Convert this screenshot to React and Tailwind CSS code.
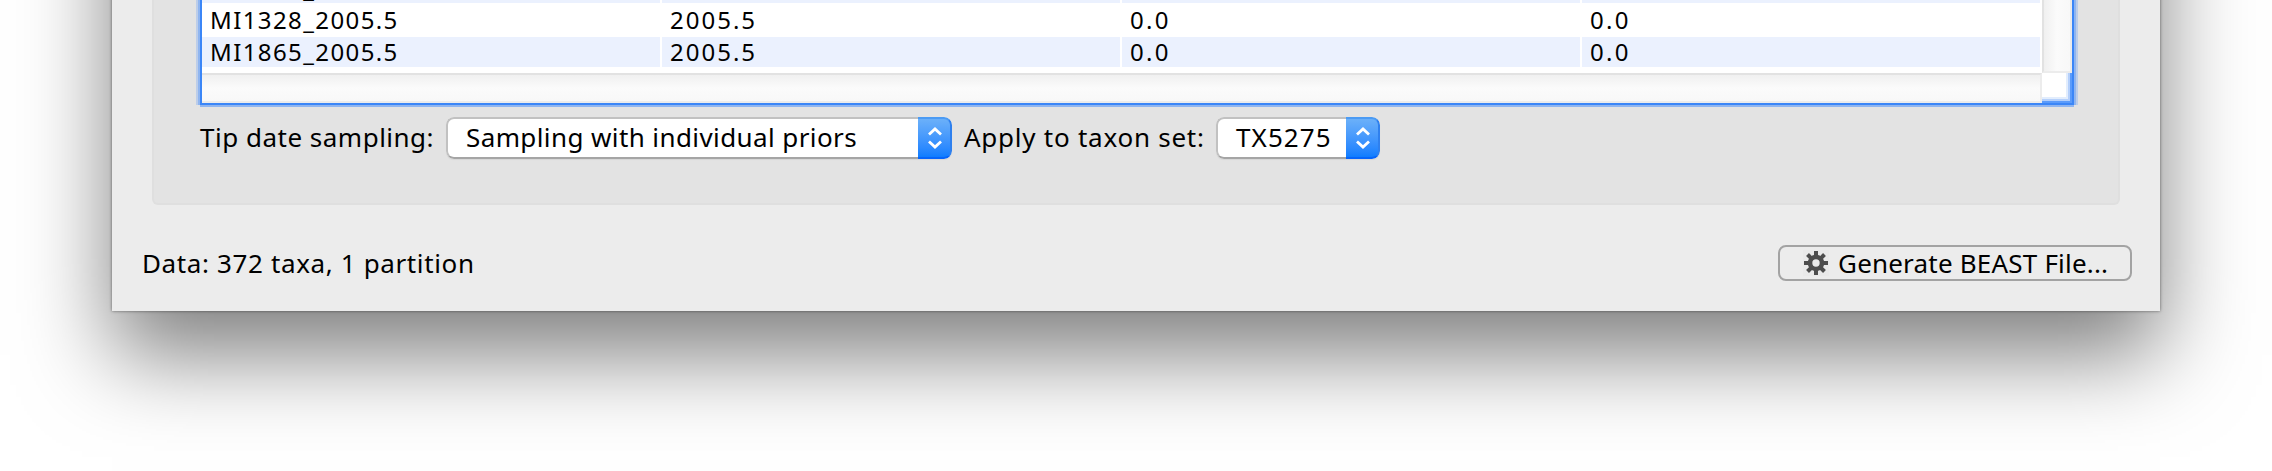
import React from "react";

const rows = [
  { name: "MI1327_2005.5", striped: true },
  { name: "MI1328_2005.5", striped: false },
  { name: "MI1865_2005.5", striped: true },
];

function TableRow({ name, striped }) {
  const bg = striped ? "bg-[#ebf1fe]" : "bg-white";
  const cell = `h-[30px] w-[458px] pl-[8px] leading-[30px] whitespace-nowrap ${bg}`;
  return (
    <div className="mb-0.5 flex h-[30px] shrink-0 gap-0.5 text-[24px]">
      <div className={`${cell} tracking-[1.4px]`}>{name}</div>
      <div className={`${cell} tracking-[2px]`}>2005.5</div>
      <div className={`${cell} tracking-[2.3px]`}>0.0</div>
      <div className={`${cell} tracking-[2.3px]`}>0.0</div>
    </div>
  );
}

function Table() {
  return (
    <div className="ml-[46px] flex h-[105px] w-[1874px] shrink-0 border-x-2 border-b-2 border-[#3b86f7] bg-white shadow-[-2px_0_0_#8fb5f0,2px_0_0_#8fb5f0,0_2px_0_#8fb5f0,-4px_0_0_#bccde9,4px_0_0_#bccde9]">
      <div className="flex w-[1840px] flex-col">
        <div className="flex h-[73px] flex-col justify-end overflow-hidden pb-1">
          {rows.map((r) => (
            <TableRow key={r.name} {...r} />
          ))}
        </div>
        <div className="h-[30px] border-t-2 border-r-2 border-b-2 border-[#ececec] border-t-[#e2e2e2] bg-linear-to-b from-[#f0f0f0] via-[#fbfbfb] to-[#f8f8f8]" />
      </div>
      <div className="flex w-[30px] flex-col">
        <div className="h-[73px] border-r-2 border-b-2 border-l-2 border-[#ececec] border-l-[#e2e2e2] bg-linear-to-r from-[#f0f0f0] via-[#fbfbfb] to-[#f8f8f8]" />
        <div className="h-[30px] bg-white shadow-[inset_-2px_-2px_0_#5a9bfb,inset_-4px_-4px_0_#b5d0fb,inset_-6px_-6px_0_#e2edfd]" />
      </div>
    </div>
  );
}

function Select({ children, className }) {
  return (
    <div className={`flex h-[42px] overflow-hidden rounded-[8px] shadow-[0_1px_1px_rgba(0,0,0,.06)] ${className}`}>
      <div className="flex grow items-center rounded-l-[8px] border-2 border-r-0 border-[#c1c1c1] border-b-[#a5a5a5] bg-white pb-0.5 whitespace-nowrap">
        {children}
      </div>
      <div className="flex w-[34px] shrink-0 items-center justify-center rounded-r-[8px] border-t-2 border-r-2 border-b-2 border-[#2f80ee] border-t-[#4b9bf4] border-b-[#0665fb] bg-linear-to-b from-[#6bb0f9] to-[#0d7dff] pl-0.5">
        <svg width="16" height="24" viewBox="0 0 16 24" fill="none" stroke="white" strokeWidth="2.8">
          <path d="M2 8.5 8 3 14 8.5M2 15.5 8 21 14 15.5" />
        </svg>
      </div>
    </div>
  );
}

function Gear() {
  return (
    <svg width="26" height="26" viewBox="-13 -13 26 26" className="shrink-0 bg-[#e9e9e9]">
      {[0, 45, 90, 135].map((a) => (
        <rect key={a} x="-2" y="-12" width="4" height="24" fill="#4d4d4d" transform={`rotate(${a})`} />
      ))}
      <circle r="6" fill="#e9e9e9" stroke="#4d4d4d" strokeWidth="4.6" />
    </svg>
  );
}

export default function App() {
  return (
    <div className="flex h-[471px] w-[2272px] flex-col overflow-hidden bg-white px-28 font-['Noto_Sans','Open_Sans',sans-serif] text-[26px] text-black">
      <div className="-mt-[300px] flex h-[611px] shrink-0 flex-col bg-[#ececec] pt-[300px] shadow-[0_44px_84px_rgba(0,0,0,.5),0_0_3px_rgba(0,0,0,.5)]">
        <div className="mx-10 flex h-[205px] shrink-0 flex-col overflow-hidden rounded-b-[6px] border-2 border-t-0 border-[#dfdfdf] bg-[#e3e3e3]">
          <Table />
          <div className="mt-3 ml-[46px] flex h-[42px] shrink-0 items-center whitespace-nowrap">
            <div className="w-[246px] shrink-0 pb-0.5 tracking-[0.5px]">Tip date sampling:</div>
            <Select className="w-[506px] shrink-0">
              <span className="pl-[18px] tracking-[0.4px]">Sampling with individual priors</span>
            </Select>
            <div className="w-[264px] shrink-0 pb-0.5 pl-3 tracking-[0.75px]">Apply to taxon set:</div>
            <Select className="w-[164px] shrink-0">
              <span className="pl-[18px] tracking-[1.1px]">TX5275</span>
            </Select>
          </div>
        </div>
        <div className="mt-10 flex h-9 items-center justify-between pr-7 pl-[30px]">
          <div className="tracking-[0.63px]">Data: 372 taxa, 1 partition</div>
          <div className="flex h-9 w-[354px] items-center rounded-[8px] border-2 border-[#a3a3a3] pl-[23px] whitespace-nowrap">
            <Gear />
            <span className="pl-[9px] tracking-[0.2px]">Generate BEAST File...</span>
          </div>
        </div>
      </div>
    </div>
  );
}
